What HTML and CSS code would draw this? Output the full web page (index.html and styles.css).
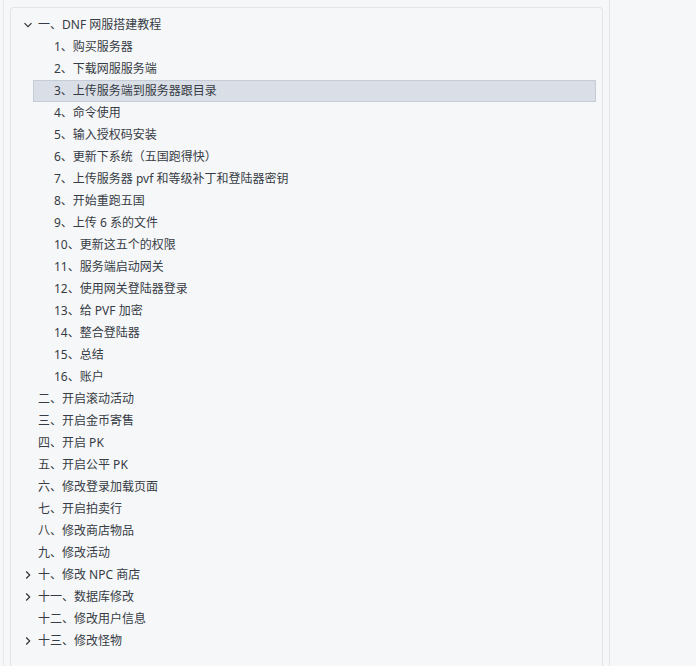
FILE: index.html
```html
<!DOCTYPE html>
<html lang="zh-CN">
<head>
<meta charset="utf-8">
<link rel="stylesheet" href="styles.css">
</head>
<body>
<div class="page">
  <div class="side">
    <div class="panel">
      <div class="row top"><span class="chev"><svg width="10" height="10" viewBox="0 0 10 10"><path d="M1.5 3.2 L5 6.7 L8.5 3.2" fill="none" stroke="#333" stroke-width="1.2"/></svg></span><span>一、DNF 网服搭建教程</span></div>
      <div class="row child">1、购买服务器</div>
      <div class="row child">2、下载网服服务端</div>
      <div class="row child sel">3、上传服务端到服务器跟目录</div>
      <div class="row child">4、命令使用</div>
      <div class="row child">5、输入授权码安装</div>
      <div class="row child">6、更新下系统（五国跑得快）</div>
      <div class="row child">7、上传服务器 pvf 和等级补丁和登陆器密钥</div>
      <div class="row child">8、开始重跑五国</div>
      <div class="row child">9、上传 6 系的文件</div>
      <div class="row child">10、更新这五个的权限</div>
      <div class="row child">11、服务端启动网关</div>
      <div class="row child">12、使用网关登陆器登录</div>
      <div class="row child">13、给 PVF 加密</div>
      <div class="row child">14、整合登陆器</div>
      <div class="row child">15、总结</div>
      <div class="row child">16、账户</div>
      <div class="row top"><span class="chev"></span><span>二、开启滚动活动</span></div>
      <div class="row top"><span class="chev"></span><span>三、开启金币寄售</span></div>
      <div class="row top"><span class="chev"></span><span>四、开启 PK</span></div>
      <div class="row top"><span class="chev"></span><span>五、开启公平 PK</span></div>
      <div class="row top"><span class="chev"></span><span>六、修改登录加载页面</span></div>
      <div class="row top"><span class="chev"></span><span>七、开启拍卖行</span></div>
      <div class="row top"><span class="chev"></span><span>八、修改商店物品</span></div>
      <div class="row top"><span class="chev"></span><span>九、修改活动</span></div>
      <div class="row top"><span class="chev"><svg width="10" height="10" viewBox="0 0 10 10"><path d="M3.2 1.5 L6.7 5 L3.2 8.5" fill="none" stroke="#333" stroke-width="1.2"/></svg></span><span>十、修改 NPC 商店</span></div>
      <div class="row top"><span class="chev"><svg width="10" height="10" viewBox="0 0 10 10"><path d="M3.2 1.5 L6.7 5 L3.2 8.5" fill="none" stroke="#333" stroke-width="1.2"/></svg></span><span>十一、数据库修改</span></div>
      <div class="row top"><span class="chev"></span><span>十二、修改用户信息</span></div>
      <div class="row top"><span class="chev"><svg width="10" height="10" viewBox="0 0 10 10"><path d="M3.2 1.5 L6.7 5 L3.2 8.5" fill="none" stroke="#333" stroke-width="1.2"/></svg></span><span>十三、修改怪物</span></div>
    </div>
  </div>
  <div class="rest"></div>
</div>
</body>
</html>
```
FILE: styles.css
```css
html, body {
  margin: 0;
  padding: 0;
  background: #f6f7f9;
  height: 100%;
  overflow: hidden;
}
body {
  font-family: "Noto Sans", "Noto Sans CJK SC", sans-serif;
  font-size: 12px;
  color: #363c45;
}
.page {
  display: flex;
  height: 666px;
}
.side {
  margin-left: 3px;
  border-left: 1px solid #e6e8eb;
  border-right: 1px solid #e3e5e8;
  padding: 7px 6px 0 6px;
  box-sizing: border-box;
  width: 607px;
}
.panel {
  border: 1px solid #e3e5e8;
  border-bottom: none;
  border-radius: 4px 4px 0 0;
  height: 100%;
  box-sizing: border-box;
  padding-top: 6px;
}
.row {
  height: 22px;
  line-height: 22px;
  white-space: nowrap;
  box-sizing: border-box;
}
.top {
  display: flex;
  align-items: center;
  padding-left: 11px;
}
.chev {
  width: 12px;
  height: 22px;
  margin-right: 4px;
  display: flex;
  align-items: center;
  justify-content: center;
}
.chev svg { display: block; }
.child {
  margin-left: 22px;
  margin-right: 6px;
  padding-left: 21px;
}
.sel {
  background: #dadfe7;
  border: 1px solid #c6cdd7;
  line-height: 20px;
  padding-left: 20px;
}
.rest {
  flex: 1;
}
```
